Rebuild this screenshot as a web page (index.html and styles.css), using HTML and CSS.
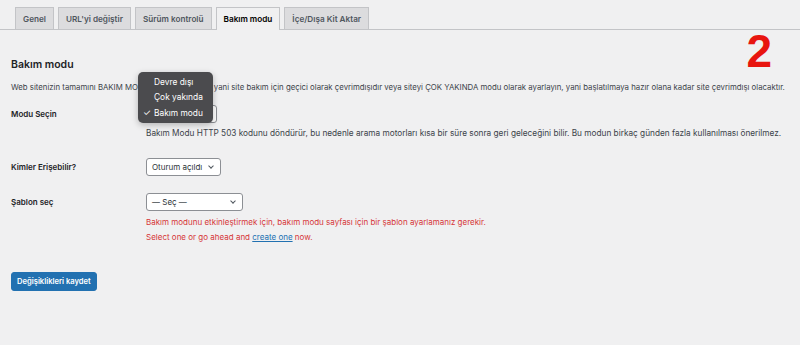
FILE: index.html
```html
<!DOCTYPE html>
<html lang="tr">
<head>
    <meta charset="UTF-8">
    <title>Bakım modu</title>
    <link rel="stylesheet" href="styles.css">
</head>
<body>
    <div class="tabs">
        <a class="tab">Genel</a>
        <a class="tab">URL'yi değiştir</a>
        <a class="tab">Sürüm kontrolü</a>
        <a class="tab active">Bakım modu</a>
        <a class="tab">İçe/Dışa Kit Aktar</a>
    </div>

    <div class="wrap">
        <div class="step">2</div>
        <h2>Bakım modu</h2>
        <p class="intro">Web sitenizin tamamını BAKIM MODU olarak ayarlayın, yani site bakım için geçici olarak çevrimdışıdır veya siteyi ÇOK YAKINDA modu olarak ayarlayın, yani başlatılmaya hazır olana kadar site çevrimdışı olacaktır.</p>

        <div class="row row-mode">
            <div class="label">Modu Seçin</div>
            <div class="field">
                <div class="select-holder">
                    <div class="select sel-mode">Bakım modu <span class="chev"></span></div>
                    <ul class="menu">
                        <li>Devre dışı</li>
                        <li>Çok yakında</li>
                        <li class="checked"><span class="tick">✓</span>Bakım modu</li>
                    </ul>
                </div>
                <p class="desc">Bakım Modu HTTP 503 kodunu döndürür, bu nedenle arama motorları kısa bir süre sonra geri geleceğini bilir. Bu modun birkaç günden fazla kullanılması önerilmez.</p>
            </div>
        </div>

        <div class="row row-access">
            <div class="label">Kimler Erişebilir?</div>
            <div class="field">
                <div class="select sel-access">Oturum açıldı <span class="chev"></span></div>
            </div>
        </div>

        <div class="row row-template">
            <div class="label">Şablon seç</div>
            <div class="field">
                <div class="select sel-template">— Seç — <span class="chev"></span></div>
                <p class="error">Bakım modunu etkinleştirmek için, bakım modu sayfası için bir şablon ayarlamanız gerekir.</p>
                <p class="error">Select one or go ahead and <a href="#">create one</a> now.</p>
            </div>
        </div>

        <button class="save-btn">Değişiklikleri kaydet</button>
    </div>
</body>
</html>
```

FILE: styles.css
```css
body {
    margin: 0;
    background-color: #f0f0f1;
    font-family: Inter, "Noto Sans", sans-serif;
    color: #1d2327;
    font-size: 8px;
}

.tabs {
    display: flex;
    gap: 4px;
    padding: 7px 0 0 15px;
    border-bottom: 1px solid #c3c4c7;
    height: 22px;
}

.tab {
    display: flex;
    align-items: center;
    padding: 0 7px;
    background-color: #dcdcde;
    border: 1px solid #c3c4c7;
    border-bottom: none;
    color: #50575e;
    font-size: 8.2px;
    font-weight: 600;
}

.tab.active {
    background-color: #f0f0f1;
    color: #000;
    margin-bottom: -1px;
}

.wrap {
    position: relative;
    padding: 0 11px;
}

.step {
    position: absolute;
    top: -2px;
    right: 28px;
    color: #e8150f;
    font-family: "Liberation Sans", Arial, sans-serif;
    font-weight: bold;
    font-size: 46px;
    line-height: 1;
}

h2 {
    margin: 0;
    padding-top: 28px;
    font-size: 10.5px;
    font-weight: 600;
    color: #1d2327;
}

.intro {
    margin: 11px 0 0;
    font-size: 7.8px;
    color: #3c434a;
}

.row {
    display: flex;
}

.label {
    width: 135px;
    flex-shrink: 0;
    font-weight: 600;
    font-size: 8px;
    color: #1d2327;
}

.row-mode {
    margin-top: 13px;
}

.row-mode .label {
    padding-top: 4px;
}

.row-access {
    margin-top: 20px;
}

.row-access .label {
    padding-top: 4px;
}

.row-template {
    margin-top: 17px;
}

.row-template .label {
    padding-top: 4px;
}

.select-holder {
    position: relative;
}

.select {
    display: flex;
    align-items: center;
    justify-content: space-between;
    box-sizing: border-box;
    height: 18px;
    padding: 0 5px;
    background-color: #fff;
    border: 1px solid #8c8f94;
    border-radius: 3px;
    font-size: 8px;
    color: #2c3338;
}

.sel-mode {
    width: 71px;
}

.sel-access {
    width: 75px;
}

.sel-template {
    width: 97px;
}

.chev {
    width: 3px;
    height: 3px;
    border-right: 1px solid #50575e;
    border-bottom: 1px solid #50575e;
    transform: rotate(45deg);
    margin: 0 2px 3px 3px;
}

.menu {
    position: absolute;
    top: -33px;
    left: -8px;
    width: 75px;
    box-sizing: border-box;
    margin: 0;
    padding: 3px 0;
    list-style: none;
    background-color: #4b4b4e;
    border-radius: 5px;
    box-shadow: 0 2px 6px rgba(0,0,0,0.25);
    color: #fff;
    font-size: 8.4px;
}

.menu li {
    height: 15px;
    line-height: 15px;
    padding-left: 16px;
}

.menu .tick {
    display: inline-block;
    width: 11px;
    margin-left: -11px;
    font-size: 9px;
}

.desc {
    margin: 5px 0 0;
    font-size: 8.25px;
    color: #3c434a;
}

.error {
    margin: 4px 0 0;
    font-size: 8px;
    color: #d63638;
    line-height: 12px;
}

.error + .error {
    margin-top: 3px;
}

.error:first-of-type {
    margin-top: 5px;
}

.error a {
    color: #2271b1;
}

.save-btn {
    margin-top: 29px;
    height: 19px;
    padding: 0 5px;
    background-color: #2271b1;
    border: 1px solid #2271b1;
    border-radius: 3px;
    color: #fff;
    font-family: Inter, "Noto Sans", sans-serif;
    font-size: 7.6px;
    font-weight: 600;
}
```
